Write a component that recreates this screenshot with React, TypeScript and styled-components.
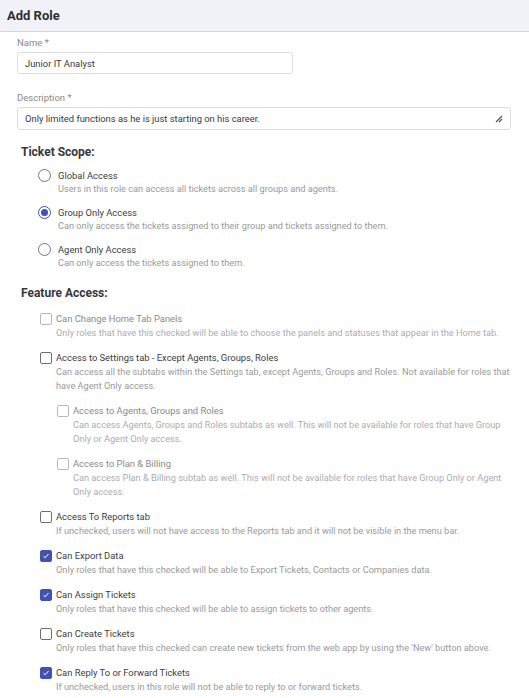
import styled, { createGlobalStyle } from "styled-components";

const GlobalStyle = createGlobalStyle`
  body {
    margin: 0;
    background: #fff;
    font-family: Roboto, "Liberation Sans", sans-serif;
  }
`;

const Page = styled.div`
  width: 529px;
  height: 698px;
  overflow: hidden;
  background: #fff;
`;

const Header = styled.div`
  height: 31px;
  display: flex;
  align-items: center;
  padding: 0 7px;
  background: #f1f2f8;
  border-bottom: 1px solid #d3d6ea;
  font-size: 13px;
  font-weight: 700;
  color: #2d2f33;
`;

const Body = styled.div`
  padding: 4px 10px 0 17px;
`;

const FieldLabel = styled.div`
  font-size: 9.5px;
  line-height: 14px;
  color: #8a8a8a;
  margin-bottom: 2px;
`;

const Field = styled.div<{ $width: number; $height: number }>`
  box-sizing: border-box;
  width: ${(p) => p.$width}px;
  height: ${(p) => p.$height}px;
  border: 1px solid #dedede;
  border-radius: 3px;
  display: flex;
  align-items: center;
  justify-content: space-between;
  padding: 0 7px;
  font-size: 9.4px;
  color: #3a3a3a;
`;

const FieldGroup = styled.div<{ $mb: number }>`
  margin-bottom: ${(p) => p.$mb}px;
`;

const SectionTitle = styled.div<{ $mb: number }>`
  font-size: 12px;
  line-height: 14px;
  font-weight: 700;
  color: #37383c;
  padding-left: 4px;
  margin-bottom: ${(p) => p.$mb}px;
`;

const Options = styled.div<{ $indent: number; $gap: number }>`
  display: flex;
  flex-direction: column;
  gap: ${(p) => p.$gap}px;
  padding-left: ${(p) => p.$indent}px;
  margin-bottom: 17px;
`;

const Option = styled.div<{ $indent?: number; $gap: number }>`
  display: flex;
  align-items: flex-start;
  gap: ${(p) => p.$gap}px;
  padding-left: ${(p) => p.$indent || 0}px;
`;

const OptionText = styled.div<{ $lh: number }>`
  display: flex;
  flex-direction: column;
  line-height: ${(p) => p.$lh}px;
`;

const OptionLabel = styled.div<{ $disabled?: boolean }>`
  font-size: 9.4px;
  color: ${(p) => (p.$disabled ? "#8a8a8a" : "#3d3d3d")};
`;

const OptionDesc = styled.div<{ $disabled?: boolean }>`
  font-size: 9.2px;
  color: ${(p) => (p.$disabled ? "#adadad" : "#9a9a9a")};
`;

const Radio = styled.span<{ $checked?: boolean }>`
  box-sizing: border-box;
  flex: none;
  width: 13px;
  height: 13px;
  border-radius: 50%;
  border: 1px solid ${(p) => (p.$checked ? "#4152b3" : "#757575")};
  display: flex;
  align-items: center;
  justify-content: center;
  &::after {
    content: "";
    width: 7px;
    height: 7px;
    border-radius: 50%;
    background: ${(p) => (p.$checked ? "#4152b3" : "transparent")};
  }
`;

const Box = styled.span<{ $checked?: boolean; $disabled?: boolean }>`
  box-sizing: border-box;
  flex: none;
  width: 12px;
  height: 12px;
  margin-top: 1px;
  border-radius: 2px;
  border: 1px solid
    ${(p) => (p.$checked ? "#4152b3" : p.$disabled ? "#b8b8b8" : "#6f6f6f")};
  background: ${(p) => (p.$checked ? "#4152b3" : "#fff")};
  display: flex;
  align-items: center;
  justify-content: center;
`;

const ResizeGrip = () => (
  <svg width="9" height="9" viewBox="0 0 9 9">
    <path d="M8 2 L2 8 M8 5 L5 8" stroke="#555" strokeWidth="1.2" />
  </svg>
);

const Tick = () => (
  <svg width="8" height="8" viewBox="0 0 8 8">
    <path d="M1.5 4.2 L3.2 5.8 L6.5 2" stroke="#fff" strokeWidth="1" fill="none" />
  </svg>
);

const scopes = [
  { label: "Global Access", desc: "Users in this role can access all tickets across all groups and agents.", checked: false },
  { label: "Group Only Access", desc: "Can only access the tickets assigned to their group and tickets assigned to them.", checked: true },
  { label: "Agent Only Access", desc: "Can only access the tickets assigned to them.", checked: false },
];

type Feature = { label: string; desc: string; checked?: boolean; disabled?: boolean; sub?: boolean };

const features: Feature[] = [
  { label: "Can Change Home Tab Panels", desc: "Only roles that have this checked will be able to choose the panels and statuses that appear in the Home tab.", disabled: true },
  { label: "Access to Settings tab - Except Agents, Groups, Roles", desc: "Can access all the subtabs within the Settings tab, except Agents, Groups and Roles. Not available for roles that have Agent Only access." },
  { label: "Access to Agents, Groups and Roles", desc: "Can access Agents, Groups and Roles subtabs as well. This will not be available for roles that have Group Only or Agent Only access.", disabled: true, sub: true },
  { label: "Access to Plan & Billing", desc: "Can access Plan & Billing subtab as well. This will not be available for roles that have Group Only or Agent Only access.", disabled: true, sub: true },
  { label: "Access To Reports tab", desc: "If unchecked, users will not have access to the Reports tab and it will not be visible in the menu bar." },
  { label: "Can Export Data", desc: "Only roles that have this checked will be able to Export Tickets, Contacts or Companies data.", checked: true },
  { label: "Can Assign Tickets", desc: "Only roles that have this checked will be able to assign tickets to other agents.", checked: true },
  { label: "Can Create Tickets", desc: "Only roles that have this checked can create new tickets from the web app by using the 'New' button above." },
  { label: "Can Reply To or Forward Tickets", desc: "If unchecked, users in this role will not be able to reply to or forward tickets.", checked: true },
];

export default function App() {
  return (
    <Page>
      <GlobalStyle />
      <Header>Add Role</Header>
      <Body>
        <FieldGroup $mb={17}>
          <FieldLabel>Name *</FieldLabel>
          <Field $width={276} $height={22}>Junior IT Analyst</Field>
        </FieldGroup>
        <FieldGroup $mb={15}>
          <FieldLabel>Description *</FieldLabel>
          <Field $width={494} $height={23}>
            Only limited functions as he is just starting on his career.
            <ResizeGrip />
          </Field>
        </FieldGroup>

        <SectionTitle $mb={10}>Ticket Scope:</SectionTitle>
        <Options $indent={21} $gap={11}>
          {scopes.map((s) => (
            <Option key={s.label} $gap={7}>
              <Radio $checked={s.checked} />
              <OptionText $lh={13}>
                <OptionLabel>{s.label}</OptionLabel>
                <OptionDesc>{s.desc}</OptionDesc>
              </OptionText>
            </Option>
          ))}
        </Options>

        <SectionTitle $mb={12}>Feature Access:</SectionTitle>
        <Options $indent={23} $gap={11}>
          {features.map((f) => (
            <Option key={f.label} $indent={f.sub ? 17 : 0} $gap={4}>
              <Box $checked={f.checked} $disabled={f.disabled}>
                {f.checked && <Tick />}
              </Box>
              <OptionText $lh={14}>
                <OptionLabel $disabled={f.disabled}>{f.label}</OptionLabel>
                <OptionDesc $disabled={f.disabled}>{f.desc}</OptionDesc>
              </OptionText>
            </Option>
          ))}
        </Options>
      </Body>
    </Page>
  );
}
